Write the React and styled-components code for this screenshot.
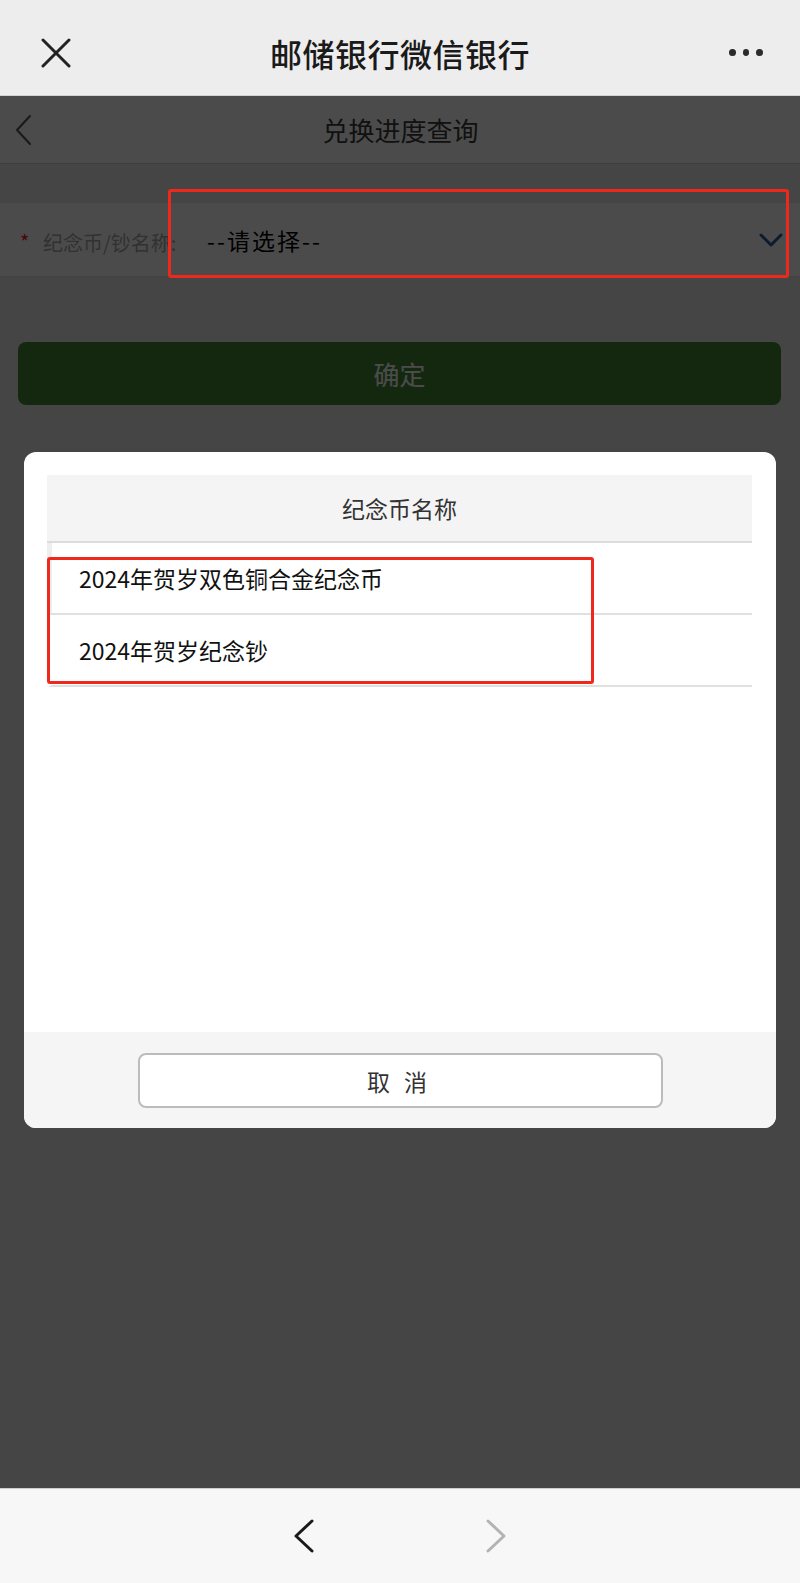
import React from "react";
import styled, { createGlobalStyle } from "styled-components";

const coins = ["2024年贺岁双色铜合金纪念币", "2024年贺岁纪念钞"];

const GlobalStyle = createGlobalStyle`
  * { box-sizing: border-box; }
  body {
    margin: 0;
    background: #f7f7f7;
    font-family: "Noto Sans CJK SC", "Noto Sans", sans-serif;
  }
`;

const Screen = styled.div`
  position: relative;
  width: 800px;
  height: 1583px;
  display: flex;
  flex-direction: column;
  overflow: hidden;
`;

const TopBar = styled.header`
  height: 96px;
  flex-shrink: 0;
  padding: 10px 37px 0 41px;
  background: #ededed;
  border-bottom: 1px solid #d2d2d2;
  display: flex;
  align-items: center;
  justify-content: space-between;
`;

const TopTitle = styled.h1`
  margin: 0;
  font-size: 32px;
  font-weight: 500;
  color: #1a1a1a;
  letter-spacing: 0.5px;
`;

const IconBox = styled.div`
  width: ${(p) => p.$w}px;
  height: ${(p) => p.$h}px;
  display: flex;
  align-items: center;
  justify-content: center;
`;

const Dots = styled.div`
  display: flex;
  gap: 7px;
  width: 34px;
  span {
    width: 7px;
    height: 7px;
    border-radius: 50%;
    background: #2b2b2b;
  }
`;

const Page = styled.main`
  position: relative;
  flex: 1;
  background: #ebebeb;
`;

const SubHeader = styled.div`
  height: 68px;
  padding-left: 15px;
  background: #fff;
  border-bottom: 1px solid #cfcfcf;
  display: grid;
  grid-template-columns: 40px 1fr 40px;
  align-items: center;
`;

const SubTitle = styled.div`
  text-align: center;
  font-size: 26px;
  color: #3a3a3a;
  padding-right: 14px;
`;

const FormRow = styled.div`
  margin-top: 38px;
  height: 75px;
  padding: 0 17px 0 20px;
  background: #fff;
  border-top: 1px solid #e2e2e2;
  border-bottom: 1px solid #e2e2e2;
  display: flex;
  align-items: center;
`;

const Star = styled.span`
  color: #f01818;
  font-size: 20px;
  width: 23px;
  padding-top: 4px;
`;

const Label = styled.span`
  font-size: 20px;
  color: #a8a8a8;
  width: 164px;
  padding-top: 6px;
`;

const SelectText = styled.span`
  flex: 1;
  font-size: 23px;
  color: #000;
  letter-spacing: 2px;
`;

const ConfirmButton = styled.button`
  display: block;
  margin: 65px 19px 0 18px;
  width: calc(100% - 37px);
  height: 63px;
  border: none;
  border-radius: 8px;
  background: #458a35;
  color: #fff;
  font-family: inherit;
  font-size: 26px;
`;

const Overlay = styled.div`
  position: absolute;
  inset: 0;
  background: rgba(0, 0, 0, 0.705);
  padding: 356px 24px 0 24px;
`;

const Modal = styled.div`
  background: #fff;
  border-radius: 12px;
  overflow: hidden;
`;

const ModalBody = styled.div`
  height: 580px;
  padding: 23px 24px 0 23px;
`;

const TableHead = styled.div`
  height: 68px;
  background: #f4f4f4;
  border-bottom: 2px solid #dcdcdc;
  display: flex;
  align-items: center;
  justify-content: center;
  font-size: 23px;
  color: #333;
`;

const TableRow = styled.div`
  height: 72px;
  padding-left: 27px;
  border-bottom: 2px solid #e0e0e0;
  border-left: 5px solid ${(p) => (p.$first ? "#eeeeee" : "transparent")};
  display: flex;
  align-items: center;
  font-size: 23px;
  color: #111;
`;

const ModalFooter = styled.div`
  height: 96px;
  background: #f5f5f5;
  display: flex;
  justify-content: center;
  padding-top: 21px;
`;

const CancelButton = styled.button`
  width: 525px;
  height: 55px;
  background: #fff;
  border: 2px solid #bcbcbc;
  border-radius: 8px;
  font-family: inherit;
  font-size: 23px;
  color: #333;
  letter-spacing: 14px;
  padding-left: 14px;
`;

const BottomBar = styled.footer`
  height: 95px;
  flex-shrink: 0;
  background: #f7f7f7;
  border-top: 1px solid #cdcdcd;
  display: flex;
  align-items: center;
  justify-content: center;
  gap: 172px;
`;

const Mark = styled.div`
  position: absolute;
  border: 3px solid #f0281c;
  border-radius: 3px;
`;

const Chevron = ({ dir, color, w, h, sw }) => (
  <svg width={w} height={h} viewBox={`0 0 ${w} ${h}`}>
    <polyline
      points={
        dir === "left"
          ? `${w - 2},2 2,${h / 2} ${w - 2},${h - 2}`
          : dir === "right"
          ? `2,2 ${w - 2},${h / 2} 2,${h - 2}`
          : `2,2 ${w / 2},${h - 2} ${w - 2},2`
      }
      fill="none"
      stroke={color}
      strokeWidth={sw}
      strokeLinecap="round"
      strokeLinejoin="round"
    />
  </svg>
);

export default function App() {
  return (
    <>
      <GlobalStyle />
      <Screen>
        <TopBar>
          <IconBox $w={30} $h={30}>
            <svg width="30" height="30" viewBox="0 0 30 30">
              <path d="M2 2 L28 28 M28 2 L2 28" stroke="#222" strokeWidth="3" strokeLinecap="round" />
            </svg>
          </IconBox>
          <TopTitle>邮储银行微信银行</TopTitle>
          <Dots>
            <span />
            <span />
            <span />
          </Dots>
        </TopBar>

        <Page>
          <SubHeader>
            <IconBox $w={17} $h={32}>
              <Chevron dir="left" color="#555" w={17} h={32} sw={2} />
            </IconBox>
            <SubTitle>兑换进度查询</SubTitle>
            <span />
          </SubHeader>

          <FormRow>
            <Star>*</Star>
            <Label>纪念币/钞名称:</Label>
            <SelectText>--请选择--</SelectText>
            <IconBox $w={24} $h={14}>
              <Chevron dir="down" color="#2f5f96" w={24} h={14} sw={3} />
            </IconBox>
          </FormRow>

          <ConfirmButton>确定</ConfirmButton>

          <Overlay>
            <Modal>
              <ModalBody>
                <TableHead>纪念币名称</TableHead>
                {coins.map((c, i) => (
                  <TableRow key={c} $first={i === 0}>
                    {c}
                  </TableRow>
                ))}
              </ModalBody>
              <ModalFooter>
                <CancelButton>取消</CancelButton>
              </ModalFooter>
            </Modal>
          </Overlay>
        </Page>

        <BottomBar>
          <IconBox $w={20} $h={34}>
            <Chevron dir="left" color="#1a1a1a" w={20} h={34} sw={3} />
          </IconBox>
          <IconBox $w={20} $h={34}>
            <Chevron dir="right" color="#b3b3b3" w={20} h={34} sw={3} />
          </IconBox>
        </BottomBar>

        <Mark style={{ left: 168, top: 189, width: 621, height: 89 }} />
        <Mark style={{ left: 47, top: 557, width: 547, height: 127 }} />
      </Screen>
    </>
  );
}
